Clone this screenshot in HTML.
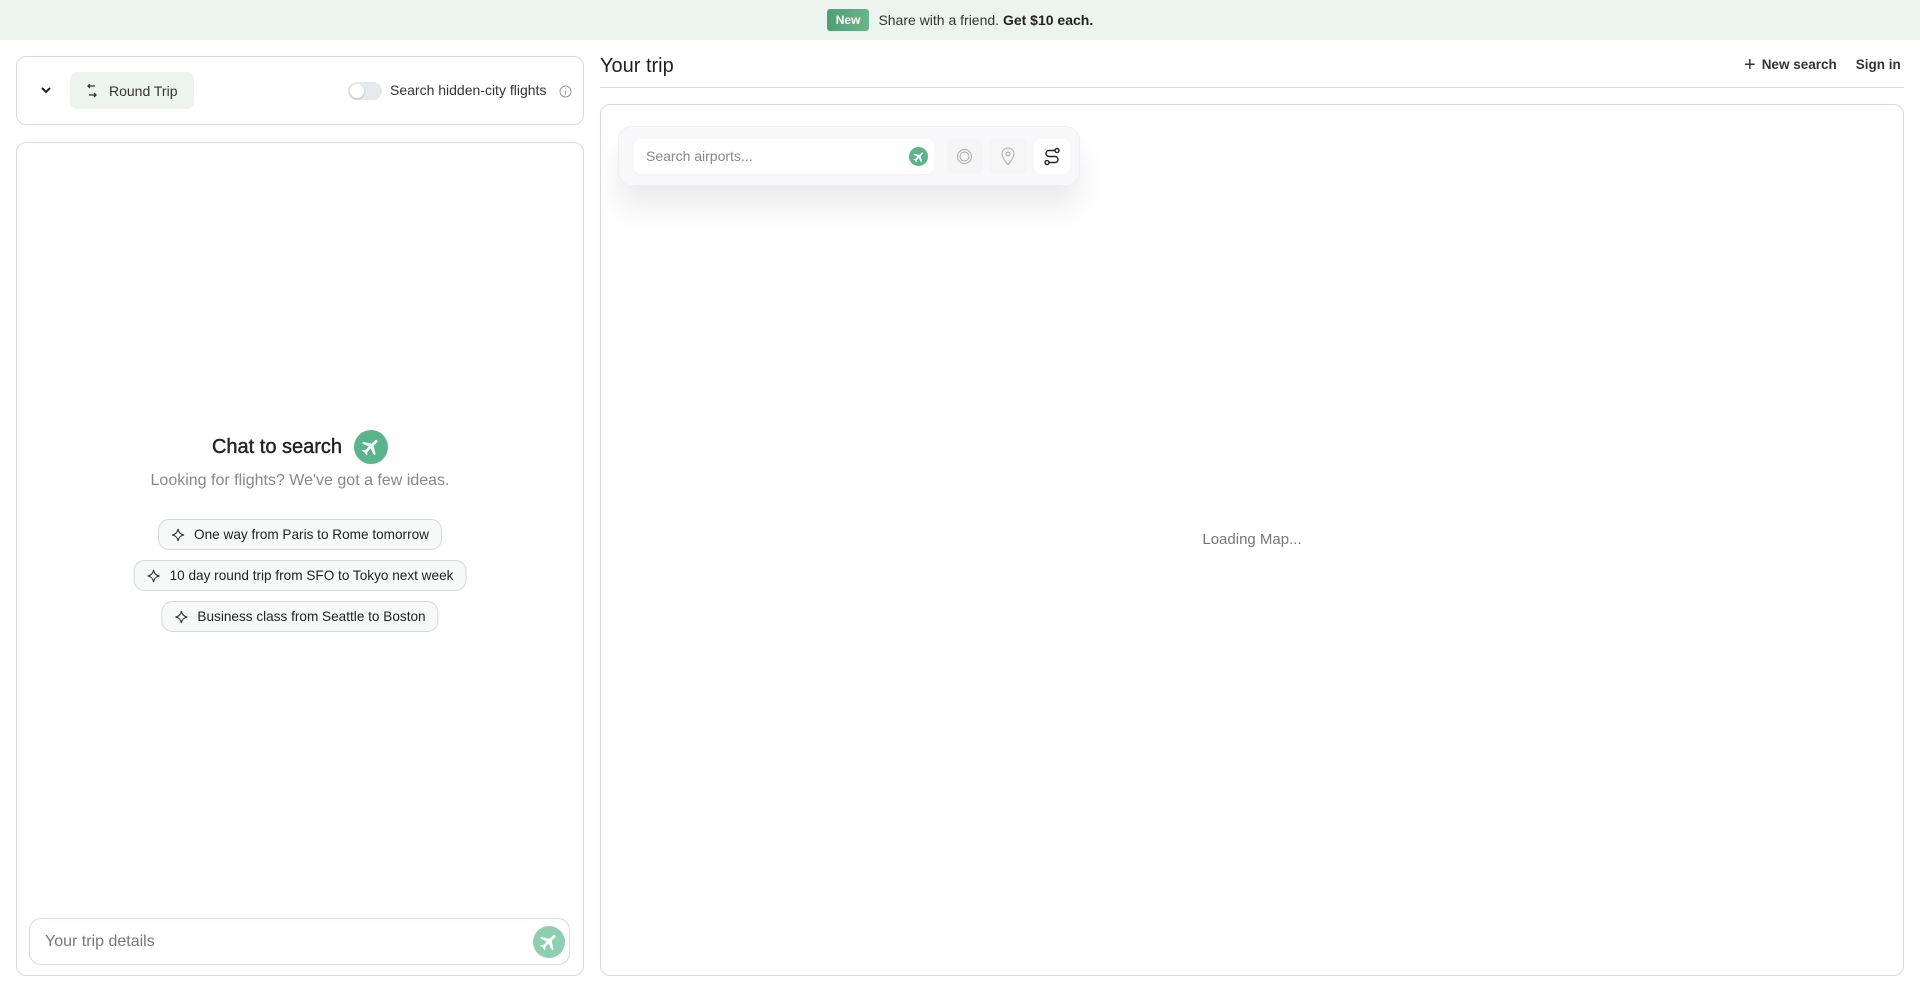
<!DOCTYPE html>
<html><head><meta charset="utf-8"><style>
*{box-sizing:border-box;margin:0;padding:0}
body{width:1920px;height:993px;overflow:hidden;background:#fff;font-family:"Liberation Sans",sans-serif;color:#222;position:relative}
.abs{position:absolute}
.banner{left:0;top:0;width:1920px;height:40px;background:#edf3ef;display:flex;align-items:center;justify-content:center;font-size:14px;color:#333}
.badge{background:linear-gradient(90deg,#4f9e73,#6cb48b);color:#fff;font-weight:bold;font-size:12px;padding:4px 9px;border-radius:3px;margin-right:9px}
.card{border:1px solid #d6d9df;border-radius:10px;background:#fff}
.chip{position:absolute;left:50%;transform:translateX(-50%);height:31px;border:1px solid #d4d7dc;background:#f7f8f8;border-radius:11px;font-size:13.6px;display:flex;align-items:center;padding:0 12px;white-space:nowrap;color:#222}
.chip svg{margin-right:9px}
.plane{border-radius:50%;background:#5bb58c;display:flex;align-items:center;justify-content:center}
</style></head><body>
<div class="abs banner"><span class="badge">New</span>Share with a friend.&nbsp;<b style="font-weight:600;color:#222">Get $10 each.</b></div>

<div class="abs card" style="left:16px;top:56px;width:568px;height:69px">
  <svg class="abs" style="left:23px;top:28px" width="12" height="10" viewBox="0 0 12 10"><path d="M2 3l4 4 4-4" fill="none" stroke="#222" stroke-width="2"/></svg>
  <div class="abs" style="left:53px;top:15px;width:124px;height:37px;background:#edf3ef;border-radius:7px;display:flex;align-items:center;padding-left:15px;font-size:14px;color:#333">
    <svg width="14" height="14" viewBox="0 0 14 14" style="margin-right:10px"><path d="M10 2H3M5 0L3 2l2 2M4 11h7M9 9l2 2-2 2" fill="none" stroke="#333" stroke-width="1.3"/></svg>Round Trip</div>
  <div class="abs" style="left:331px;top:25px;width:34px;height:18px;border-radius:9px;background:#e6e9ed"><div style="position:absolute;left:2px;top:2px;width:14px;height:14px;border-radius:50%;background:#fff;box-shadow:0 1px 2px rgba(0,0,0,.2)"></div></div>
  <div class="abs" style="left:373px;top:25px;font-size:14px;color:#333">Search hidden-city flights</div>
  <svg class="abs" style="left:542px;top:28px" width="13" height="13" viewBox="0 0 13 13"><circle cx="6.5" cy="6.5" r="5.5" fill="none" stroke="#999"/><path d="M6.5 5.5v4M6.5 3.5v.8" stroke="#999"/></svg>
</div>

<div class="abs card" style="left:16px;top:142px;width:568px;height:834px">
  <div class="abs" style="left:0;width:566px;top:287px;display:flex;justify-content:center;align-items:center;font-size:20px;color:#222;-webkit-text-stroke:0.4px #222">Chat to search<div class="plane" style="width:34px;height:34px;margin-left:12px"><svg width="22" height="22" viewBox="0 0 24 24"><path fill="#fff" d="M21 16v-2l-8-5V3.5a1.5 1.5 0 0 0-3 0V9l-8 5v2l8-2.5V19l-2 1.5V22l3.5-1 3.5 1v-1.5L13 19v-5.5z" transform="rotate(45 12 12)"/></svg></div></div>
  <div class="abs" style="left:0;width:566px;top:329px;text-align:center;font-size:16px;color:#888">Looking for flights? We've got a few ideas.</div>
  <div class="chip" style="top:376px"><svg width="14" height="14" viewBox="0 0 14 14"><path d="M7 1Q7.8 6.2 13 7Q7.8 7.8 7 13Q6.2 7.8 1 7Q6.2 6.2 7 1z" fill="none" stroke="#333" stroke-width="1.1"/></svg>One way from Paris to Rome tomorrow</div>
  <div class="chip" style="top:417px"><svg width="14" height="14" viewBox="0 0 14 14"><path d="M7 1Q7.8 6.2 13 7Q7.8 7.8 7 13Q6.2 7.8 1 7Q6.2 6.2 7 1z" fill="none" stroke="#333" stroke-width="1.1"/></svg>10 day round trip from SFO to Tokyo next week</div>
  <div class="chip" style="top:458px"><svg width="14" height="14" viewBox="0 0 14 14"><path d="M7 1Q7.8 6.2 13 7Q7.8 7.8 7 13Q6.2 7.8 1 7Q6.2 6.2 7 1z" fill="none" stroke="#333" stroke-width="1.1"/></svg>Business class from Seattle to Boston</div>
  <div class="abs" style="left:12px;top:775px;width:541px;height:47px;border:1px solid #d6d9df;border-radius:12px">
    <div class="abs" style="left:15px;top:14px;font-size:16px;color:#777">Your trip details</div>
    <div class="abs plane" style="right:4px;top:7px;width:32px;height:32px;background:#8fcfb1"><svg width="22" height="22" viewBox="0 0 24 24"><path fill="#fff" d="M21 16v-2l-8-5V3.5a1.5 1.5 0 0 0-3 0V9l-8 5v2l8-2.5V19l-2 1.5V22l3.5-1 3.5 1v-1.5L13 19v-5.5z" transform="rotate(45 12 12)"/></svg></div>
  </div>
</div>

<div class="abs" style="left:600px;top:55px;font-size:20px;color:#222">Your trip</div>
<div class="abs" style="left:1744px;top:57px;font-size:13.5px;font-weight:600;color:#333;display:flex;align-items:center"><span style="font-size:20px;font-weight:300;margin-right:6px;line-height:14px">+</span>New search<span style="margin-left:19px">Sign in</span></div>
<div class="abs" style="left:600px;top:87px;width:1304px;height:1px;background:#d6d9df"></div>

<div class="abs card" style="left:600px;top:104px;width:1304px;height:872px">
  <div class="abs" style="left:0;width:1302px;top:426px;text-align:center;font-size:15px;color:#777">Loading Map...</div>
</div>
<div class="abs" style="left:618px;top:126px;width:462px;height:60px;border-radius:14px;background:#f8f8fa;box-shadow:0 22px 30px rgba(0,0,0,.08);border:1px solid #f0f0f3">
  <div class="abs" style="left:15px;top:12px;width:300px;height:35px;background:#fff;border-radius:7px;box-shadow:0 1px 2px rgba(0,0,0,.04)">
    <div class="abs" style="left:12px;top:9px;font-size:14px;color:#888">Search airports...</div>
    <div class="abs plane" style="right:6px;top:8px;width:19px;height:19px"><svg width="14" height="14" viewBox="0 0 24 24"><path fill="#fff" d="M21 16v-2l-8-5V3.5a1.5 1.5 0 0 0-3 0V9l-8 5v2l8-2.5V19l-2 1.5V22l3.5-1 3.5 1v-1.5L13 19v-5.5z" transform="rotate(45 12 12)"/></svg></div>
  </div>
  <div class="abs" style="left:327px;top:12px;width:37px;height:35px;background:#f5f5f6;border-radius:7px"><svg class="abs" style="left:10px;top:9px" width="17" height="17" viewBox="0 0 17 17"><circle cx="8.5" cy="8.5" r="7" fill="none" stroke="#aaa"/><circle cx="8.5" cy="8.5" r="4.5" fill="none" stroke="#aaa"/></svg></div>
  <div class="abs" style="left:370px;top:12px;width:38px;height:35px;background:#f5f5f6;border-radius:7px"><svg class="abs" style="left:11px;top:8px" width="16" height="19" viewBox="0 0 16 19"><path d="M8 17.5C4 13 2 10 2 7a6 6 0 0 1 12 0c0 3-2 6-6 10.5z" fill="none" stroke="#aaa"/><circle cx="8" cy="7" r="2" fill="none" stroke="#aaa"/></svg></div>
  <div class="abs" style="left:415px;top:12px;width:36px;height:35px;background:#fff;border-radius:7px"><svg class="abs" style="left:9px;top:8px" width="18" height="19" viewBox="0 0 18 19"><circle cx="14" cy="3.5" r="2" fill="none" stroke="#222" stroke-width="1.4"/><circle cx="4" cy="15.5" r="2" fill="none" stroke="#222" stroke-width="1.4"/><path d="M12 3.5H6a3 3 0 0 0 0 6h6a3 3 0 0 1 0 6H6" fill="none" stroke="#222" stroke-width="1.4"/></svg></div>
</div>
</body></html>
